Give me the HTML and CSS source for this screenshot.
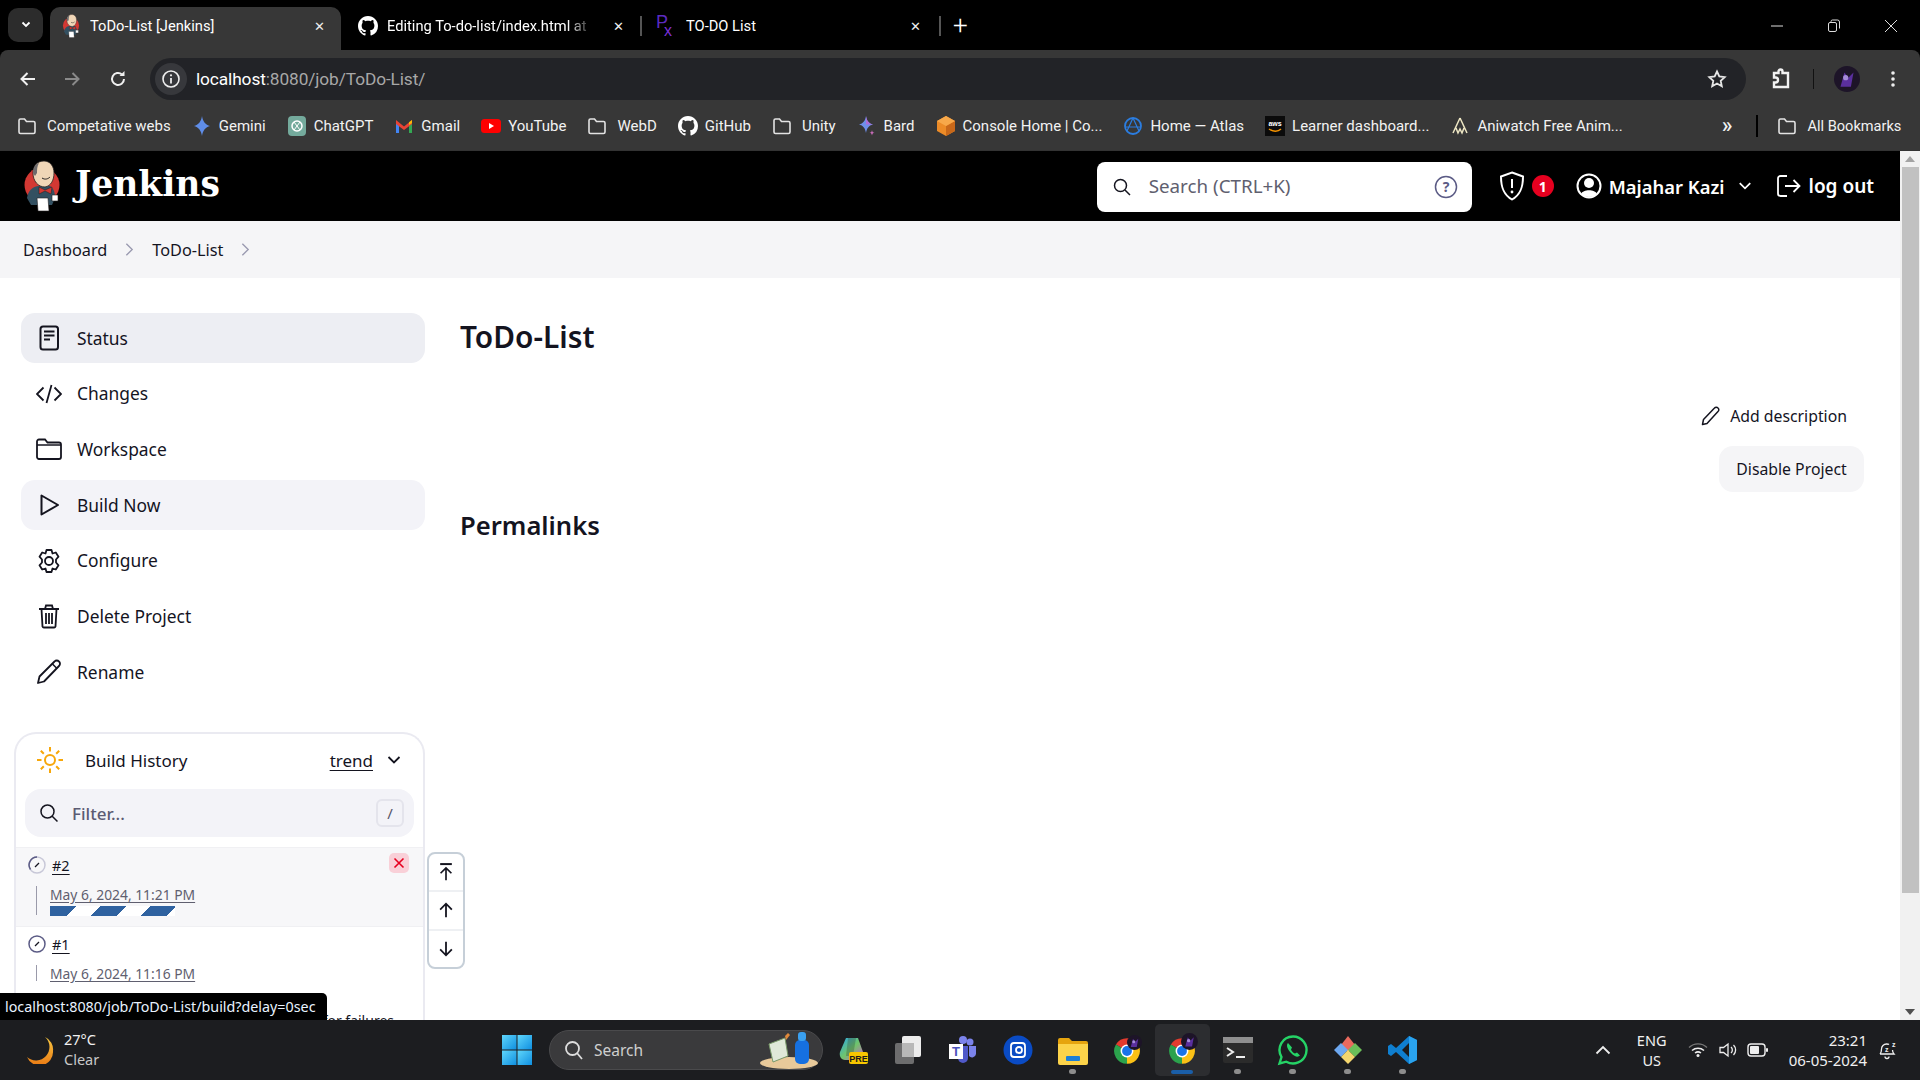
FILE: index.html
```html
<!DOCTYPE html>
<html lang="en">
<head>
<meta charset="utf-8">
<title>ToDo-List [Jenkins]</title>
<link rel="stylesheet" href="styles.css">
</head>
<body>
<svg class="defs" aria-hidden="true">
  <defs>
    <linearGradient id="winblue" x1="0" y1="0" x2="1" y2="1"><stop offset="0" stop-color="#5fd6fb"/><stop offset="1" stop-color="#0f8fe0"/></linearGradient>
    <linearGradient id="moon" x1="0" y1="0" x2="0" y2="1"><stop offset="0" stop-color="#f7c842"/><stop offset="1" stop-color="#ea7a14"/></linearGradient>
    <linearGradient id="copilot" x1="0" y1="0" x2="1" y2="1"><stop offset="0" stop-color="#2aa7e8"/><stop offset=".5" stop-color="#6fc56a"/><stop offset="1" stop-color="#d25ac8"/></linearGradient>
  </defs>
  <symbol id="jenkins" viewBox="0 0 36 52">
    <circle cx="18" cy="25" r="17.5" fill="#d33833"/>
    <path d="M3 38c1-7 5-11 11-12l12 0c3 2 5 5 5 12l-3 7H7z" fill="#335061"/>
    <path d="M9 13C9 5 14 1 20 1s10 5 10 12c0 7-3 13-9 14-7 0-12-6-12-14z" fill="#f0d6b7" stroke="#231f20" stroke-width=".8"/>
    <path d="M9 13c0-5 2-9 6-10-2 3-2 7-2 10l-2 3z" fill="#6d6b6d"/>
    <path d="M18 18c3 2 6 1 8-1" fill="none" stroke="#231f20" stroke-width="1"/>
    <path d="M15 27l6 3 7-3-1 7-6-3-6 3z" fill="#d33833" stroke="#231f20" stroke-width=".5"/>
    <path d="M13 38h11l1 13H14z" fill="#fff" stroke="#231f20" stroke-width=".6"/>
    <path d="M28 35h6v6h-6z" fill="#fff" stroke="#231f20" stroke-width=".6"/>
  </symbol>
  <symbol id="github" viewBox="0 0 16 16"><path fill="currentColor" d="M8 0C3.58 0 0 3.58 0 8c0 3.54 2.29 6.53 5.47 7.59.4.07.55-.17.55-.38 0-.19-.01-.82-.01-1.49-2.01.37-2.53-.49-2.69-.94-.09-.23-.48-.94-.82-1.13-.28-.15-.68-.52-.01-.53.63-.01 1.08.58 1.23.82.72 1.21 1.87.87 2.33.66.07-.52.28-.87.51-1.07-1.78-.2-3.64-.89-3.64-3.95 0-.87.31-1.59.82-2.15-.08-.2-.36-1.02.08-2.12 0 0 .67-.21 2.2.82.64-.18 1.32-.27 2-.27.68 0 1.36.09 2 .27 1.53-1.04 2.2-.82 2.2-.82.44 1.1.16 1.92.08 2.12.51.56.82 1.27.82 2.15 0 3.07-1.87 3.75-3.65 3.95.29.25.54.73.54 1.48 0 1.07-.01 1.93-.01 2.2 0 .21.15.46.55.38A8.013 8.013 0 0016 8c0-4.42-3.58-8-8-8z"/></symbol>
  <symbol id="folder" viewBox="0 0 20 20"><path d="M2 16V4.500A1.500 1.500 0 0 1 3.500 3h4l2 2.500h7A1.500 1.500 0 0 1 18 7v9a1.500 1.500 0 0 1-1.500 1.500h-13A1.500 1.500 0 0 1 2 16z" fill="none" stroke="#e3e3e3" stroke-width="1.600"/></symbol>
  <symbol id="spark" viewBox="0 0 20 20"><path d="M10 0c.8 5.400 3.600 9 8 10-4.400 1-7.200 4.600-8 10-.8-5.400-3.600-9-8-10 4.400-1 7.200-4.600 8-10z" fill="#5f8de8"/></symbol>
  <symbol id="chrome" viewBox="0 0 24 24">
    <path d="M12 12L2.470 6.500A11 11 0 0 1 21.530 6.500z" fill="#e33b2e"/>
    <path d="M12 12L21.530 6.500A11 11 0 0 1 12 23z" fill="#fbc116"/>
    <path d="M12 12L12 23A11 11 0 0 1 2.470 6.500z" fill="#2ba24c"/>
    <circle cx="12" cy="12" r="5.500" fill="#fff"/><circle cx="12" cy="12" r="4.200" fill="#1a73e8"/>
  </symbol>
  <symbol id="avatar" viewBox="0 0 20 20"><circle cx="10" cy="10" r="10" fill="#1d1428"/><path d="M5 16l3-11 3 4 4-4-2 11z" fill="#5a2f9e"/><circle cx="9" cy="9" r="2" fill="#a58ad8"/></symbol>
</svg>

<header class="tabstrip">
  <button class="tabs-menu" type="button"><svg class="i12" viewBox="0 0 12 12"><path d="M2.500 4.500L6 8l3.500-3.500" fill="none" stroke="#fff" stroke-width="1.800"/></svg></button>
  <div class="tab tab-active">
    <svg class="fav fav-j"><use href="#jenkins"/></svg>
    <span class="tab-title">ToDo-List [Jenkins]</span>
    <span class="tab-x">✕</span>
  </div>
  <div class="tab tab-2">
    <svg class="fav fav-w"><use href="#github"/></svg>
    <span class="tab-title tab-fade">Editing To-do-list/index.html at</span>
    <span class="tab-x">✕</span>
  </div>
  <i class="tab-sep"></i>
  <div class="tab tab-3">
    <svg class="fav" viewBox="0 0 20 22"><text x="0" y="13" class="px-p">P</text><text x="8" y="21" class="px-x">x</text></svg>
    <span class="tab-title">TO-DO List</span>
    <span class="tab-x">✕</span>
  </div>
  <i class="tab-sep"></i>
  <span class="tab-new">+</span>
  <div class="win-ctrl">
    <svg class="i14" viewBox="0 0 14 14"><path d="M1 7h12" stroke="#ddd" stroke-width="1"/></svg>
    <svg class="i14" viewBox="0 0 14 14"><rect x="1.500" y="3.500" width="8" height="9" rx="1.500" fill="none" stroke="#ddd"/><path d="M4 3.500V2.500A1.500 1.500 0 0 1 5.500 1h5A2 2 0 0 1 12.500 3v6.500" fill="none" stroke="#ddd"/></svg>
    <svg class="i14" viewBox="0 0 14 14"><path d="M1 1l12 12M13 1L1 13" stroke="#ddd" stroke-width="1"/></svg>
  </div>
</header>

<nav class="toolbar">
  <svg class="tb-ic tb-back" viewBox="0 0 20 20"><path d="M17 10H4M9.500 4L3.500 10l6 6" fill="none" stroke="#f0f0f0" stroke-width="2"/></svg>
  <svg class="tb-ic tb-fwd" viewBox="0 0 20 20"><path d="M3 10h13M10.500 4l6 6-6 6" fill="none" stroke="#8a8a8a" stroke-width="2"/></svg>
  <svg class="tb-ic tb-rel" viewBox="0 0 20 20"><path d="M16 10a6 6 0 1 1-2-4.500" fill="none" stroke="#f0f0f0" stroke-width="2"/><path d="M16.500 2v5h-5z" fill="#f0f0f0"/></svg>
  <div class="omnibox">
    <span class="omni-info"><svg class="i20" viewBox="0 0 20 20"><circle cx="10" cy="10" r="8" fill="none" stroke="#eee" stroke-width="1.600"/><path d="M10 9v5.500" stroke="#eee" stroke-width="1.800"/><circle cx="10" cy="6.300" r="1.100" fill="#eee"/></svg></span>
    <span class="omni-url"><b>localhost</b>:8080/job/ToDo-List/</span>
    <svg class="omni-star" viewBox="0 0 20 20"><path d="M10 2.500l2.300 5 5.400.6-4 3.700 1.100 5.400L10 14.500l-4.800 2.700 1.100-5.400-4-3.700 5.400-.6z" fill="none" stroke="#e6e6e6" stroke-width="1.800"/></svg>
  </div>
  <svg class="tb-ext" viewBox="0 0 22 22"><path d="M4 5h4.500V3.500a2 2 0 0 1 4 0V5H18v14H4v-4.500h1.500a2.500 2.500 0 0 0 0-5H4z" fill="none" stroke="#f2f2f2" stroke-width="2.400"/></svg>
  <i class="tb-sep"></i>
  <svg class="tb-avatar"><use href="#avatar"/></svg>
  <svg class="tb-dots" viewBox="0 0 6 20"><circle cx="3" cy="4" r="1.800" fill="#eee"/><circle cx="3" cy="10" r="1.800" fill="#eee"/><circle cx="3" cy="16" r="1.800" fill="#eee"/></svg>
</nav>

<nav class="bookmarks">
  <a class="bm bm-folder"><svg class="bm-ic"><use href="#folder"/></svg>Competative webs</a>
  <a class="bm"><svg class="bm-ic"><use href="#spark"/></svg>Gemini</a>
  <a class="bm"><svg class="bm-ic" viewBox="0 0 20 20"><rect x="1" y="0" width="18" height="20" rx="4" fill="#74aa9c"/><circle cx="10" cy="10" r="5" fill="none" stroke="#fff" stroke-width="1.500"/><path d="M7 6l6 8M13 6l-6 8" stroke="#fff"/></svg>ChatGPT</a>
  <a class="bm"><svg class="bm-ic" viewBox="0 0 20 20"><path d="M2 5v12h3V9z" fill="#4285f4"/><path d="M18 5v12h-3V9z" fill="#34a853"/><path d="M2 4l8 6.500L18 4v4l-8 6-8-6z" fill="#ea4335"/><path d="M15 6.300L18 4v3l-3 2z" fill="#fbbc04"/></svg>Gmail</a>
  <a class="bm"><svg class="bm-ic" viewBox="0 0 20 20"><rect x="0" y="3" width="20" height="14" rx="3.500" fill="#f00"/><path d="M8 7l5 3-5 3z" fill="#fff"/></svg>YouTube</a>
  <a class="bm bm-folder"><svg class="bm-ic"><use href="#folder"/></svg>WebD</a>
  <a class="bm"><svg class="bm-ic bm-gh"><use href="#github"/></svg>GitHub</a>
  <a class="bm bm-folder"><svg class="bm-ic"><use href="#folder"/></svg>Unity</a>
  <a class="bm"><svg class="bm-ic" viewBox="0 0 20 20"><path d="M9 0c.7 4.500 2.700 7.500 7 8.500-4.300 1-6.300 4-7 8.500-.7-4.500-2.700-7.500-7-8.500C6.300 7.500 8.300 4.500 9 0z" fill="#6f8fea"/><path d="M9 0c.7 4.500 2.700 7.500 7 8.500H9z" fill="#b06cd8"/><path d="M15 14c.3 1.800.9 2.400 2.500 2.700-1.600.3-2.200 1-2.500 2.800-.3-1.800-.9-2.500-2.500-2.800 1.600-.3 2.200-.9 2.500-2.700z" fill="#c86cb8"/></svg>Bard</a>
  <a class="bm"><svg class="bm-ic" viewBox="0 0 20 20"><path d="M10 0l9 5v10l-9 5-9-5V5z" fill="#ec8b27"/><path d="M10 10l9-5v10l-9 5z" fill="#c8681a"/><path d="M10 0l9 5-9 5-9-5z" fill="#f7a84a"/></svg>Console Home | Co...</a>
  <a class="bm"><svg class="bm-ic" viewBox="0 0 20 20"><circle cx="10" cy="10" r="8" fill="none" stroke="#2b7de0" stroke-width="1.800"/><path d="M10 2L4 15M10 2l6 13M3 11h14" fill="none" stroke="#2b7de0" stroke-width="1.200"/></svg>Home — Atlas</a>
  <a class="bm"><svg class="bm-ic" viewBox="0 0 20 20"><rect width="20" height="20" fill="#0b0b0b"/><text x="10" y="10" class="aws-t">aws</text><path d="M4 13c4 3 9 3 12 0" fill="none" stroke="#f79400" stroke-width="1.500"/></svg>Learner dashboard...</a>
  <a class="bm"><svg class="bm-ic" viewBox="0 0 20 20"><path d="M10 2L3 17M10 2l7 15M6 12l2 5 2-4 2 4 2-5" fill="none" stroke="#eee7c4" stroke-width="1.500"/></svg>Aniwatch Free Anim...</a>
  <span class="bm-more">»</span>
  <i class="bm-sep"></i>
  <a class="bm bm-folder bm-all"><svg class="bm-ic"><use href="#folder"/></svg>All Bookmarks</a>
</nav>

<div class="viewport">
  <div class="page">
    <header class="jk-header">
      <a class="jk-brand"><svg class="jk-logo"><use href="#jenkins"/></svg><span class="jk-name">Jenkins</span></a>
      <div class="jk-search">
        <svg class="i20" viewBox="0 0 20 20"><circle cx="8.500" cy="8.500" r="6" fill="none" stroke="#14141f" stroke-width="1.500"/><path d="M13 13l5 5" stroke="#14141f" stroke-width="1.500"/></svg>
        <span class="jk-search-text">Search (CTRL+K)</span>
        <svg class="jk-help" viewBox="0 0 24 24"><circle cx="12" cy="12" r="10.500" fill="none" stroke="#5b5b85" stroke-width="1.500"/><text x="12" y="17" class="help-t">?</text></svg>
      </div>
      <svg class="jk-shield" viewBox="0 0 28 30"><path d="M14 1.500l11 4c0 10-2 18-11 23-9-5-11-13-11-23z" fill="none" stroke="#fff" stroke-width="2"/><path d="M14 8v9" stroke="#fff" stroke-width="2"/><circle cx="14" cy="21" r="1.400" fill="#fff"/></svg>
      <span class="jk-badge">1</span>
      <svg class="jk-user" viewBox="0 0 26 26"><circle cx="13" cy="13" r="11.500" fill="none" stroke="#fff" stroke-width="2"/><circle cx="13" cy="10" r="5" fill="#fff"/><path d="M5 21c2-5 14-5 16 0-4 4-12 4-16 0z" fill="#fff"/></svg>
      <span class="jk-username">Majahar Kazi</span>
      <svg class="jk-caret" viewBox="0 0 12 12"><path d="M1.500 3.500L6 8l4.500-4.500" fill="none" stroke="#fff" stroke-width="1.500"/></svg>
      <svg class="jk-out" viewBox="0 0 26 26"><path d="M12 3H5.500A2.500 2.500 0 0 0 3 5.500v15A2.500 2.500 0 0 0 5.500 23H12" fill="none" stroke="#fff" stroke-width="1.800"/><path d="M10 13h14M18.500 7l6 6-6 6" fill="none" stroke="#fff" stroke-width="1.800"/></svg>
      <span class="jk-logout">log out</span>
    </header>

    <div class="crumbs">
      <a>Dashboard</a><svg class="crumb-sep" viewBox="0 0 10 16"><path d="M1.500 1.500L8 8l-6.500 6.500" fill="none" stroke="#9a9ab0" stroke-width="1.500"/></svg>
      <a>ToDo-List</a><svg class="crumb-sep" viewBox="0 0 10 16"><path d="M1.500 1.500L8 8l-6.500 6.500" fill="none" stroke="#9a9ab0" stroke-width="1.500"/></svg>
    </div>

    <div class="layout">
      <aside class="side">
        <ul class="tasks">
          <li class="task task-on"><svg class="task-ic" viewBox="0 0 26 26"><rect x="4.500" y="1.500" width="17.500" height="23" rx="2.500" fill="none" stroke="currentColor" stroke-width="2"/><path d="M8 6.500h10.500M8 10.500h10.500M8 14.500h6" stroke="currentColor" stroke-width="2"/></svg><span>Status</span></li>
          <li class="task"><svg class="task-ic" viewBox="0 0 26 26"><path d="M7.500 6.500L1 13l6.500 6.500M18.500 6.500L25 13l-6.500 6.500M15.500 4l-5 18" fill="none" stroke="currentColor" stroke-width="1.800"/></svg><span>Changes</span></li>
          <li class="task"><svg class="task-ic" viewBox="0 0 26 26"><path d="M1 21V5.500A2 2 0 0 1 3 3.500h6l2.500 3H23A2 2 0 0 1 25 8.500V21a2 2 0 0 1-2 2H3a2 2 0 0 1-2-2z" fill="none" stroke="currentColor" stroke-width="1.800"/><path d="M1 9h24" stroke="currentColor" stroke-width="1.500"/></svg><span>Workspace</span></li>
          <li class="task task-hover"><svg class="task-ic" viewBox="0 0 26 26"><path d="M5.500 3.500v19L22 13z" fill="none" stroke="currentColor" stroke-width="2" stroke-linejoin="round"/></svg><span>Build Now</span></li>
          <li class="task"><svg class="task-ic" viewBox="0 0 26 26"><path d="M10.500 2h5l1 3.500 3.300-1 2.700 4.200-2.500 2.800v3l2.500 2.800-2.700 4.200-3.300-1-1 3.500h-5l-1-3.500-3.300 1-2.700-4.200L6 14.500v-3L3.500 8.700l2.700-4.200 3.300 1z" fill="none" stroke="currentColor" stroke-width="1.800" stroke-linejoin="round"/><circle cx="13" cy="13" r="4" fill="none" stroke="currentColor" stroke-width="1.800"/></svg><span>Configure</span></li>
          <li class="task"><svg class="task-ic" viewBox="0 0 26 26"><path d="M3 6h20M9 6l1-3.500h6L17 6M5.500 6l1 17.500a1.500 1.500 0 0 0 1.500 1h10a1.500 1.500 0 0 0 1.500-1l1-17.500M10 10v11M13 10v11M16 10v11" fill="none" stroke="currentColor" stroke-width="1.800"/></svg><span>Delete Project</span></li>
          <li class="task"><svg class="task-ic" viewBox="0 0 26 26"><path d="M2 24l1.500-6.500L18.500 2.500a3 3 0 0 1 4.500 0 3 3 0 0 1 0 4.500L8 22.500z" fill="none" stroke="currentColor" stroke-width="1.800" stroke-linejoin="round"/><path d="M16.500 5l4.500 4.500" stroke="currentColor" stroke-width="1.500"/></svg><span>Rename</span></li>
        </ul>

        <section class="history">
          <div class="hist-head">
            <svg class="hist-sun" viewBox="0 0 28 28"><circle cx="14" cy="14" r="5" fill="none" stroke="#f7a70a" stroke-width="2"/><path d="M14 1v4.500M14 22.500V27M1 14h4.500M22.500 14H27M4.800 4.800l3 3M20.200 20.200l3 3M4.800 23.200l3-3M20.200 7.800l3-3" stroke="#f7a70a" stroke-width="2"/></svg>
            <span class="hist-title">Build History</span>
            <a class="hist-trend">trend</a>
            <svg class="hist-caret" viewBox="0 0 14 14"><path d="M1.500 4L7 9.500 12.500 4" fill="none" stroke="#14141f" stroke-width="1.800"/></svg>
          </div>
          <div class="filter">
            <svg class="filter-ic" viewBox="0 0 20 20"><circle cx="8.500" cy="8.500" r="6.500" fill="none" stroke="#14141f" stroke-width="1.500"/><path d="M13 13l5.500 5.500" stroke="#14141f" stroke-width="1.500"/></svg>
            <span class="filter-text">Filter...</span>
            <kbd class="filter-key">/</kbd>
          </div>
          <article class="build build-on">
            <div class="build-top">
              <svg class="build-ic" viewBox="0 0 18 18"><circle cx="9" cy="9" r="8" fill="none" stroke="#c8c8d8" stroke-width="1.500"/><path d="M9 1a8 8 0 0 0-6.500 12.500" fill="none" stroke="#5b5b85" stroke-width="1.500"/><path d="M7 11l4-4" stroke="#14141f" stroke-width="1.300"/></svg>
              <a class="build-no">#2</a>
              <span class="build-stop"><svg viewBox="0 0 12 12"><path d="M1.500 1.500l9 9M10.500 1.500l-9 9" stroke="#e6001f" stroke-width="1.600"/></svg></span>
            </div>
            <div class="build-meta">
              <a class="build-date">May 6, 2024, 11:21 PM</a>
              <div class="build-bar"></div>
            </div>
          </article>
          <article class="build">
            <div class="build-top">
              <svg class="build-ic" viewBox="0 0 18 18"><circle cx="9" cy="9" r="8" fill="none" stroke="#5b5b85" stroke-width="1.500"/><path d="M7 11l4-4" stroke="#14141f" stroke-width="1.300"/></svg>
              <a class="build-no">#1</a>
            </div>
            <div class="build-meta build-meta-short">
              <a class="build-date">May 6, 2024, 11:16 PM</a>
            </div>
          </article>
          <div class="atom">Atom feed for all &nbsp; Atom feed for failures</div>
        </section>
      </aside>

      <main class="main">
        <h1 class="title">ToDo-List</h1>
        <div class="actions">
          <a class="add-desc"><svg class="add-ic" viewBox="0 0 20 20"><path d="M1.500 18.500l1-5L13.500 2a2.300 2.300 0 0 1 3.500 0 2.300 2.300 0 0 1 0 3.500L6 17.500z" fill="none" stroke="#14141f" stroke-width="1.500" stroke-linejoin="round"/></svg>Add description</a>
          <button class="disable" type="button">Disable Project</button>
        </div>
        <h2 class="perma">Permalinks</h2>
      </main>
    </div>

    <div class="scroll-nav">
      <span class="sn-cell"><svg viewBox="0 0 20 24"><path d="M3 2.500h14" stroke="#14141f" stroke-width="2.400"/><path d="M10 22V8M3.500 13.500L10 7l6.500 6.500" fill="none" stroke="#14141f" stroke-width="2"/></svg></span>
      <span class="sn-cell"><svg viewBox="0 0 20 20"><path d="M10 18V3M3.500 9.500L10 3l6.500 6.500" fill="none" stroke="#14141f" stroke-width="2"/></svg></span>
      <span class="sn-cell"><svg viewBox="0 0 20 20"><path d="M10 2v15M3.500 10.500L10 17l6.500-6.500" fill="none" stroke="#14141f" stroke-width="2"/></svg></span>
    </div>
    <div class="status-tip">localhost:8080/job/ToDo-List/build?delay=0sec</div>
  </div>

  <div class="vscroll">
    <span class="vs-arrow vs-up"></span>
    <span class="vs-thumb"></span>
    <span class="vs-space"></span>
    <span class="vs-arrow vs-down"></span>
  </div>
</div>

<footer class="taskbar">
  <div class="weather">
    <svg class="weather-ic" viewBox="0 0 28 28"><path d="M19 1a13 13 0 0 1-18 20 13.500 13.500 0 0 0 26-6A13.500 13.500 0 0 0 19 1z" fill="url(#moon)"/></svg>
    <div class="weather-t"><span>27°C</span><span class="weather-sub">Clear</span></div>
  </div>
  <div class="tb-center">
    <svg class="win" viewBox="0 0 30 30"><rect width="14.500" height="14.500" x="0" y="0" fill="url(#winblue)"/><rect width="14.500" height="14.500" x="15.500" y="0" fill="url(#winblue)"/><rect width="14.500" height="14.500" x="0" y="15.500" fill="url(#winblue)"/><rect width="14.500" height="14.500" x="15.500" y="15.500" fill="url(#winblue)"/></svg>
    <div class="tb-search">
      <svg class="ts-ic" viewBox="0 0 20 20"><circle cx="8.500" cy="8.500" r="6.500" fill="none" stroke="#ddd" stroke-width="1.800"/><path d="M13 13l5 6" stroke="#ddd" stroke-width="1.800"/></svg>
      <span class="ts-text">Search</span>
      <svg class="ts-art" viewBox="0 0 60 40"><ellipse cx="30" cy="33" rx="29" ry="6" fill="#e8c99a"/><path d="M10 14l16-6 3 18-15 6z" fill="#dfe8d8" stroke="#7a9a6a"/><path d="M26 6l3-3 2 2-4 5z" fill="#e0893a"/><rect x="36" y="10" width="14" height="24" rx="5" fill="#1670e0"/><rect x="39" y="2" width="8" height="9" rx="3" fill="#3aa0f0"/></svg>
    </div>
    <div class="tb-apps">
      <span class="app"><svg viewBox="0 0 30 30"><path d="M8 3h12l5 14c1 5-2 8-6 8H7c-4 0-6-4-5-8z" fill="url(#copilot)"/><path d="M10 3h8l-3 18H8z" fill="#1f1f1f" opacity=".25"/><rect x="11" y="17" width="19" height="12" rx="2" fill="#f7c600"/><text x="20.500" y="26.500" class="pre-t">PRE</text></svg></span>
      <span class="app"><svg viewBox="0 0 30 30"><rect x="9" y="1" width="19" height="21" rx="2" fill="#ececec"/><rect x="2" y="8" width="19" height="21" rx="2" fill="#777" opacity=".9"/><rect x="9" y="8" width="12" height="14" fill="#b8b8b8"/></svg></span>
      <span class="app"><svg viewBox="0 0 30 30"><circle cx="22" cy="7" r="3.500" fill="#7b83eb"/><circle cx="15" cy="5" r="4" fill="#7b83eb"/><path d="M10 11h10v12a5 5 0 0 1-10 0z" fill="#5059c9"/><path d="M21 11h7v8a4 4 0 0 1-7 2z" fill="#7b83eb"/><rect x="1" y="9" width="14" height="15" fill="#fff"/><text x="8" y="21" class="t-t">T</text></svg></span>
      <span class="app"><svg viewBox="0 0 30 30"><circle cx="15" cy="15" r="14.500" fill="#0a4bc4"/><rect x="8" y="8" width="14" height="14" rx="3" fill="none" stroke="#fff" stroke-width="1.800"/><circle cx="16" cy="15" r="3" fill="none" stroke="#fff" stroke-width="1.800"/></svg></span>
      <span class="app app-dot"><svg viewBox="0 0 30 30"><path d="M0 5a2 2 0 0 1 2-2h9l3 3h14a2 2 0 0 1 2 2v20H0z" fill="#e6a40e"/><path d="M0 9h30v19a2 2 0 0 1-2 2H2a2 2 0 0 1-2-2z" fill="#fcd34a"/><rect x="8" y="21" width="14" height="5" rx="1" fill="#1c7fd6"/></svg></span>
      <span class="app"><svg viewBox="0 0 30 30"><use href="#chrome" width="28" height="28" x="0" y="2"/><use href="#avatar" width="15" height="15" x="14" y="0"/></svg></span>
      <span class="app app-active"><svg viewBox="0 0 30 30"><use href="#chrome" width="28" height="28" x="0" y="2"/><use href="#avatar" width="17" height="17" x="13" y="-2"/></svg></span>
      <span class="app app-dot"><svg viewBox="0 0 30 30"><rect y="2" width="30" height="26" rx="2" fill="#2b2b2b"/><rect y="2" width="30" height="6" fill="#8f8f8f"/><path d="M4 13l6 4-6 4" fill="none" stroke="#eee" stroke-width="2"/><path d="M13 22h9" stroke="#eee" stroke-width="2"/></svg></span>
      <span class="app app-dot"><svg viewBox="0 0 30 30"><path d="M15 1.500a13.500 13.500 0 0 0-11.500 20.500L1.500 28.500l6.800-1.800A13.500 13.500 0 1 0 15 1.500z" fill="none" stroke="#25d366" stroke-width="2.400"/><path d="M10 8c-2 2-1 6 3 10s7 4.500 9 2.500l-3-3-2 1c-1.500-.5-3.500-2.500-4-4l1-2z" fill="#25d366"/></svg></span>
      <span class="app app-dot"><svg viewBox="0 0 30 30"><path d="M15 1l7 9-7 7-7-7z" fill="#e96a5e"/><path d="M8 8l7 7-7 7-7-7z" fill="#6da8f0"/><path d="M22 8l7 7-7 7-7-7z" fill="#6bbf59"/><path d="M15 15l7 7-7 7-7-7z" fill="#f5d76e"/></svg></span>
      <span class="app app-dot"><svg viewBox="0 0 30 30"><path d="M21 1l8 4v20l-8 4L8 17l-5 4-3-2v-8l3-2 5 4z" fill="#0f7fd0"/><path d="M21 8l-7 7 7 7z" fill="#1c1c1c"/><path d="M21 1l8 4v20l-8 4z" fill="#2aa3ee"/></svg></span>
    </div>
  </div>
  <div class="tray">
    <svg class="tray-up" viewBox="0 0 16 10"><path d="M1.500 8.500L8 2l6.500 6.500" fill="none" stroke="#eee" stroke-width="1.800"/></svg>
    <div class="tray-lang"><span>ENG</span><span>US</span></div>
    <svg class="tray-wifi" viewBox="0 0 20 16"><path d="M1 5.500a13 13 0 0 1 18 0" fill="none" stroke="#777" stroke-width="1.400"/><path d="M4 8.500a9 9 0 0 1 12 0M7 11a5 5 0 0 1 6 0" fill="none" stroke="#eee" stroke-width="1.500"/><circle cx="10" cy="13.500" r="1.500" fill="#eee"/></svg>
    <svg class="tray-vol" viewBox="0 0 20 16"><path d="M1 5.500h3.500L9 2v12l-4.500-3.500H1z" fill="none" stroke="#eee" stroke-width="1.300"/><path d="M12 5a4 4 0 0 1 0 6M14.500 3a7 7 0 0 1 0 10" fill="none" stroke="#eee" stroke-width="1.300"/></svg>
    <svg class="tray-bat" viewBox="0 0 22 14"><rect x="1" y="1" width="17" height="12" rx="3" fill="none" stroke="#eee" stroke-width="1.400"/><rect x="3" y="3" width="9" height="8" rx="1" fill="#eee"/><rect x="19" y="5" width="2" height="4" rx="1" fill="#eee"/></svg>
    <div class="tray-clock"><span>23:21</span><span>06-05-2024</span></div>
    <svg class="tray-bell" viewBox="0 0 20 20"><path d="M3 14c1.500-1.500 1.500-3 1.500-5a5 5 0 0 1 5-5c2 0 2.500.5 2.500.5M15.500 10c0 1.500.5 3 1.500 4H3M8 16.500a2 2 0 0 0 4 0" fill="none" stroke="#eee" stroke-width="1.300"/><text x="8" y="12" class="z-t">z</text><text x="15" y="7" class="z-t">z</text></svg>
  </div>
</footer>
</body>
</html>
```

FILE: styles.css
```css
* { box-sizing: border-box; }
html, body { margin: 0; height: 100%; }
body {
  display: flex; flex-direction: column; height: 1080px; overflow: hidden;
  font-family: "Noto Sans", "Liberation Sans", sans-serif; background: #000; color: #14141f;
}
.defs { position: absolute; width: 0; height: 0; }
a { color: inherit; text-decoration: none; }
ul { margin: 0; padding: 0; list-style: none; }
.i12 { width: 12px; height: 12px; }
.i14 { width: 14px; height: 14px; }
.i20 { width: 20px; height: 20px; flex: none; }

/* tab strip */
.tabstrip { height: 50px; flex: none; background: #000; display: flex; align-items: flex-end; padding-left: 8px; color: #fff; font: 14.700px Roboto, sans-serif; }
.tabs-menu { width: 35px; height: 34px; margin-bottom: 8px; border: 0; border-radius: 10px; background: #2c2c2c; display: flex; align-items: center; justify-content: center; padding: 0 0 2px; }
.tab { height: 43px; display: flex; align-items: center; flex: none; padding-bottom: 5px; }
.tab-active { width: 291px; margin-left: 7px; padding: 0 15px 5px 12px; background: #373737; border-radius: 10px 10px 0 0; gap: 10px; }
.tab-2 { width: 292px; padding: 0 0 5px 10px; gap: 9px; margin-left: 7px; }
.tab-3 { width: 297px; padding-left: 14px; gap: 10px; }
.tab-title { flex: 1; white-space: nowrap; overflow: hidden; }
.tab-2 .tab-x { margin-right: 15px; }
.tab-3 .tab-x { margin-right: 17px; }
.tab-fade { -webkit-mask-image: linear-gradient(90deg, #000 84%, transparent 96%); mask-image: linear-gradient(90deg, #000 84%, transparent 96%); }
.tab-x { font-size: 13px; color: #eee; width: 14px; text-align: center; }
.tab-sep { width: 2px; height: 20px; background: #555; margin-bottom: 14px; flex: none; }
.tab-new { font-size: 26px; font-weight: 300; line-height: 1; margin: 0 0 12px 12px; }
.fav { width: 20px; height: 22px; flex: none; }
.fav-j { width: 18px; height: 24px; }
.fav-w { color: #fff; width: 20px; height: 20px; }
.px-p { font: 400 18px "Liberation Sans", sans-serif; fill: #5b2ac0; }
.px-x { font: 400 16px "Liberation Sans", sans-serif; fill: #7a2fd8; }
.win-ctrl { margin-left: auto; margin-right: 22px; margin-bottom: 17px; display: flex; gap: 43px; }

/* toolbar */
.toolbar { height: 53px; flex: none; background: #373737; display: flex; align-items: center; border-radius: 8px 8px 0 0; padding-top: 5px; }
.tb-ic { width: 20px; height: 20px; flex: none; }
.tb-back { margin-left: 18px; }
.tb-fwd { margin-left: 24px; }
.tb-rel { margin-left: 26px; }
.omnibox { width: 1596px; height: 42px; margin-left: 22px; border-radius: 21px; background: #222327; display: flex; align-items: center; padding-left: 5px; flex: none; }
.omni-info { width: 32px; height: 32px; border-radius: 50%; background: #37383c; display: flex; align-items: center; justify-content: center; flex: none; }
.omni-url { margin-left: 9px; font: 17.300px Roboto, sans-serif; color: #a8a8a8; letter-spacing: -.1px; }
.omni-url b { color: #fff; font-weight: 400; }
.omni-star { width: 20px; height: 20px; margin-left: auto; margin-right: 19px; }
.tb-ext { width: 22px; height: 22px; margin-left: 24px; flex: none; }
.tb-sep { width: 1px; height: 20px; background: #111; margin-left: 21px; flex: none; }
.tb-avatar { width: 26px; height: 26px; margin-left: 20px; flex: none; }
.tb-dots { width: 6px; height: 20px; margin-left: 30px; flex: none; }

/* bookmarks */
.bookmarks { height: 47px; flex: none; background: #373737; display: flex; align-items: center; padding: 0 0 2px 17px; color: #f2f2f2; font: 15px Roboto, sans-serif; gap: 21px; white-space: nowrap; }
.bm { display: flex; align-items: center; gap: 7px; flex: none; }
.bm-folder { gap: 10px; }
.bm-ic { width: 20px; height: 20px; flex: none; }
.bm-gh { color: #fff; }
.aws-t { font: 700 7px "Liberation Sans", sans-serif; fill: #fff; text-anchor: middle; }
.bm-more { margin-left: 78px; font-size: 22px; font-weight: 500; line-height: 1; }
.bm-sep { width: 2px; height: 22px; background: #000; margin-left: 3px; flex: none; }
.bm-all { margin-left: -2px; font-size: 14.600px; }

/* viewport */
.viewport { flex: 1; min-height: 0; display: flex; background: #fff; border-top: 1px solid #333; }
.page { flex: 1; min-width: 0; position: relative; overflow: hidden; display: flex; flex-direction: column; }

/* jenkins header */
.jk-header { height: 70px; flex: none; background: #000; color: #fff; display: flex; align-items: center; padding: 0 26px 0 24px; }
.jk-brand { display: flex; align-items: center; gap: 15px; }
.jk-logo { width: 36px; height: 52px; }
.jk-name { font: 700 34.500px "DejaVu Serif", serif; margin-top: -4px; }
.jk-search { width: 375px; height: 50px; margin-left: auto; margin-top: 1px; background: #fff; border-radius: 8px; display: flex; align-items: center; padding: 0 14px 0 15px; color: #14141f; }
.jk-search-text { margin-left: 17px; margin-top: -2px; font-size: 18.800px; color: #5f5f6f; }
.jk-help { width: 24px; height: 24px; margin-left: auto; }
.help-t { font: 700 14px "Noto Sans", sans-serif; fill: #5b5b85; text-anchor: middle; }
.jk-shield { width: 28px; height: 30px; margin-left: 26px; }
.jk-badge { width: 22px; height: 22px; border-radius: 50%; background: #e6001f; color: #fff; font-size: 14px; font-weight: 700; margin-left: 6px; display: flex; align-items: center; justify-content: center; }
.jk-user { width: 26px; height: 26px; margin-left: 22px; }
.jk-username { font-size: 18.400px; font-weight: 600; margin-left: 7px; }
.jk-caret { width: 14px; height: 14px; margin-left: 13px; }
.jk-out { width: 26px; height: 26px; margin-left: 23px; }
.jk-logout { font-size: 19px; font-weight: 600; margin-left: 8px; }

/* breadcrumbs */
.crumbs { height: 57px; flex: none; background: #f5f5f7; display: flex; align-items: center; padding-left: 23px; font-size: 16.300px; }
.crumb-sep { width: 9px; height: 15px; margin: 0 18px; }

/* layout */
.layout { flex: 1; min-height: 0; display: flex; }
.side { width: 425px; flex: none; padding: 35px 0 0 21px; display: flex; flex-direction: column; }
.tasks { display: flex; flex-direction: column; gap: 5.700px; }
.task { height: 50px; display: flex; align-items: center; gap: 15px; padding-left: 15px; border-radius: 14px; font-size: 17.400px; }
.task span { margin-top: -1px; }
.task-on { background: #edeef3; }
.task-hover { background: #f3f3f8; }
.task-ic { width: 26px; height: 26px; flex: none; }

/* history */
.history { margin: 35px 0 0 -7px; border: 2px solid #eaeaf1; border-bottom: 0; border-radius: 22px 22px 0 0; flex: 1; overflow: hidden; display: flex; flex-direction: column; min-height: 0; }
.hist-head { height: 55px; flex: none; display: flex; align-items: center; padding: 0 22px 0 20px; font-size: 17px; }
.hist-sun { width: 28px; height: 28px; flex: none; margin-top: -3px; }
.hist-title { margin-left: 21px; margin-top: -3px; }
.hist-trend { margin-left: auto; margin-top: -3px; text-decoration: underline; text-underline-offset: 3px; }
.hist-caret { width: 14px; height: 14px; margin-left: 14px; margin-top: -3px; }
.filter { height: 48px; flex: none; margin: 0 9px; background: #f3f3f8; border-radius: 16px; display: flex; align-items: center; padding: 0 10px 0 14px; }
.filter-ic { width: 20px; height: 20px; flex: none; }
.filter-text { margin-left: 13px; font-size: 17px; font-weight: 500; color: #5b5b73; }
.filter-key { margin-left: auto; width: 28px; height: 28px; border: 2px solid #e4e4ec; border-radius: 6px; display: flex; align-items: center; justify-content: center; font: 15px "Noto Sans", sans-serif; color: #55556a; }
.build { flex: none; padding: 8px 14px 0 12px; }
.build-on { height: 80px; margin-top: 10px; background: #f7f7f9; border-top: 1px solid #f0f0f3; border-bottom: 1px solid #f0f0f3; }
.build + .build { height: 65px; }
.build-top { display: flex; align-items: center; height: 18px; }
.build-ic { width: 18px; height: 18px; flex: none; }
.build-no { margin-left: 6px; font-size: 14.500px; text-decoration: underline; text-underline-offset: 3px; }
.build-stop { margin-left: auto; margin-top: -5px; width: 20px; height: 20px; border-radius: 5px; background: #f9d0d8; display: flex; align-items: center; justify-content: center; }
.build-stop svg { width: 12px; height: 12px; }
.build-meta { margin: 12px 0 0 8px; border-left: 1px solid #9a9aaa; padding-left: 13px; height: 29px; }
.build-meta-short { height: 16px; margin-top: 12px; }
.build-date { display: block; width: max-content; font-size: 13.850px; line-height: 17px; color: #5f5f6f; text-decoration: underline; text-underline-offset: 2px; }
.build-bar { width: 125px; height: 10px; margin-top: 3px; background: repeating-linear-gradient(135deg, #2f62a0 0, #2f62a0 18.400px, #fff 18.400px, #fff 35.360px); }
.atom { flex: none; text-align: right; padding: 19px 29px 0 0; font-size: 14px; white-space: nowrap; color: #14141f; }

/* main */
.main { flex: 1; min-width: 0; padding: 34px 36px 0 35px; display: flex; flex-direction: column; }
.title { margin: 0; font-size: 29.800px; line-height: 50px; font-weight: 600; }
.actions { display: flex; flex-direction: column; align-items: flex-end; margin-top: 33px; gap: 9px; }
.add-desc { height: 42px; display: flex; align-items: center; gap: 9px; padding-right: 17px; font-size: 15.800px; }
.add-ic { width: 20px; height: 20px; }
.disable { height: 46px; width: 145px; border: 0; border-radius: 14px; background: #f5f5f7; font: 15.800px "Noto Sans", sans-serif; color: #14141f; padding: 0; }
.perma { margin: 14px 0 0; font-size: 25.600px; line-height: 40px; font-weight: 600; }

/* overlays */
.scroll-nav { position: absolute; left: 427px; top: 701px; width: 38px; height: 117px; border: 2px solid #c6cfd8; border-radius: 8px; background: #fff; display: flex; flex-direction: column; }
.sn-cell { flex: 1; display: flex; align-items: center; justify-content: center; border-bottom: 2px solid #eef0f3; }
.sn-cell:last-child { border-bottom: 0; }
.sn-cell svg { width: 18px; height: 20px; }
.status-tip { position: absolute; left: 0; bottom: 0; width: 327px; height: 27px; background: #000; color: #e9f3ff; font-size: 14.300px; line-height: 27px; padding-left: 5px; border-top-right-radius: 5px; white-space: nowrap; }

/* scrollbar */
.vscroll { width: 20px; flex: none; background: #f1f1f1; display: flex; flex-direction: column; align-items: center; }
.vs-arrow { width: 20px; height: 16px; flex: none; display: flex; align-items: center; justify-content: center; }
.vs-up::before { content: ""; border: 5px solid transparent; border-top: 0; border-bottom: 6px solid #a3a3a3; }
.vs-down::before { content: ""; border: 5px solid transparent; border-bottom: 0; border-top: 6px solid #505050; }
.vs-thumb { width: 17px; height: 726px; flex: none; background: #c1c1c1; }
.vs-space { flex: 1; }

/* taskbar */
.taskbar { height: 60px; flex: none; background: #1c1d20; color: #f0f0f0; display: flex; align-items: center; font: 14.500px "Noto Sans", sans-serif; }
.weather { width: 502px; flex: none; display: flex; align-items: center; padding-left: 26px; gap: 10px; }
.weather-ic { width: 28px; height: 28px; }
.weather-t { display: flex; flex-direction: column; margin-top: -2px; font-size: 14.500px; line-height: 20px; }
.weather-sub { color: #c8c8c8; }
.tb-center { display: flex; align-items: center; }
.win { width: 30px; height: 30px; }
.tb-search { width: 274px; height: 40px; margin-left: 17px; border-radius: 20px; background: #3a3a3c; border: 1px solid #4a4a4c; display: flex; align-items: center; padding-left: 14px; position: relative; }
.ts-ic { width: 20px; height: 22px; }
.ts-text { margin-left: 10px; font-size: 15.500px; color: #cfcfcf; }
.ts-art { width: 60px; height: 40px; margin-left: auto; margin-right: 3px; }
.tb-apps { display: flex; margin-left: 2px; }
.app { width: 55px; height: 52px; display: flex; align-items: center; justify-content: center; position: relative; flex: none; }
.app svg { width: 30px; height: 30px; overflow: visible; }
.app-dot::after { content: ""; position: absolute; bottom: 2px; left: 24px; width: 7px; height: 5px; border-radius: 3px; background: #8d8d8d; }
.app-active { background: #2c2d30; border-radius: 5px; }
.app-active::after { content: ""; position: absolute; bottom: 2px; left: 16px; width: 22px; height: 4px; border-radius: 2px; background: #1a5ea8; }
.pre-t { font: 700 9px "Liberation Sans", sans-serif; fill: #1a1a1a; text-anchor: middle; }
.t-t { font: 700 13px "Liberation Sans", sans-serif; fill: #4b53bc; text-anchor: middle; }
.tray { margin-left: auto; display: flex; align-items: center; padding-right: 23px; }
.tray-up { width: 16px; height: 10px; }
.tray-lang { width: 42px; margin-left: 20px; display: flex; flex-direction: column; align-items: center; font-size: 14.500px; line-height: 20px; }
.tray-wifi { width: 20px; height: 16px; margin-left: 15px; }
.tray-vol { width: 20px; height: 16px; margin-left: 11px; }
.tray-bat { width: 22px; height: 14px; margin-left: 8px; }
.tray-clock { margin-left: 20px; display: flex; flex-direction: column; align-items: flex-end; font-size: 15px; line-height: 20px; }
.tray-bell { width: 20px; height: 20px; margin-left: 10px; }
.z-t { font: 700 7px "Liberation Sans", sans-serif; fill: #eee; }
```
